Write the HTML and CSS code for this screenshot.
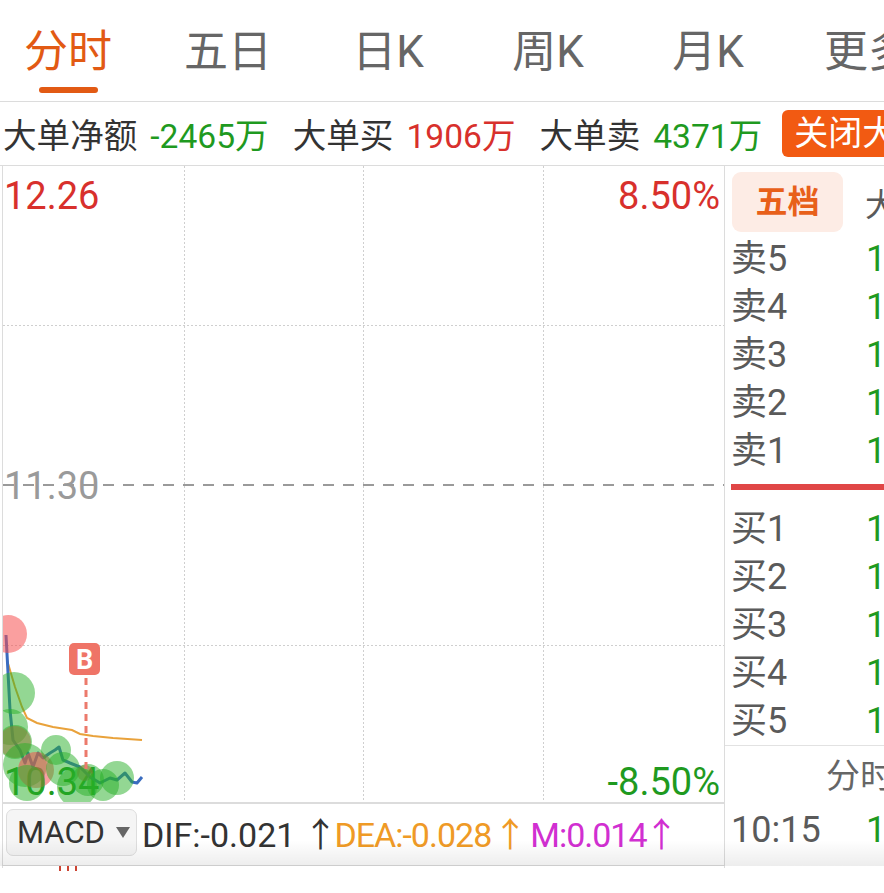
FILE: index.html
```html
<!DOCTYPE html>
<html lang="zh-CN">
<head>
    <meta charset="UTF-8">
    <meta name="viewport" content="width=device-width, initial-scale=1.0">
    <title>分时</title>
    <link rel="stylesheet" href="styles.css">
</head>
<body>
    <div class="page">
        <div class="tabs">
            <div class="tab active">分时</div>
            <div class="tab">五日</div>
            <div class="tab">日K</div>
            <div class="tab">周K</div>
            <div class="tab">月K</div>
            <div class="tab">更多</div>
        </div>

        <div class="summary">
            <span class="label">大单净额</span>
            <span class="num down">-2465万</span>
            <span class="label">大单买</span>
            <span class="num up">1906万</span>
            <span class="label">大单卖</span>
            <span class="num down">4371万</span>
            <button class="close-btn">关闭大单</button>
        </div>

        <div class="main">
            <div class="left">
                <svg class="chart" width="721" height="636" viewBox="0 0 721 636">
                    <!-- grid -->
                    <g stroke="#cfcfcf" stroke-width="1" stroke-dasharray="2 2">
                        <line x1="181.5" y1="0" x2="181.5" y2="636"/>
                        <line x1="360.5" y1="0" x2="360.5" y2="636"/>
                        <line x1="540.5" y1="0" x2="540.5" y2="636"/>
                        <line x1="0" y1="159.5" x2="721" y2="159.5"/>
                        <line x1="0" y1="479.5" x2="721" y2="479.5"/>
                    </g>

                    <g class="axis">
                        <text x="1" y="43" class="up-fill">12.26</text>
                        <text x="717" y="43" text-anchor="end" class="up-fill">8.50%</text>
                        <text x="1" y="333" class="mid-fill">11.30</text>
                        <text x="1" y="629" class="down-fill">10.34</text>
                        <text x="717" y="629" text-anchor="end" class="down-fill">-8.50%</text>
                    </g>

                    <line x1="0" y1="319" x2="721" y2="319" stroke="#9a9a9a" stroke-width="2" stroke-dasharray="11 9"/>

                    <!-- price + average -->
                    <polyline fill="none" stroke="#e9a23b" stroke-width="2"
                        points="4,494 12,521 19,541 24,552 34,557 50,561 69,564 77,568 90,570 110,572 139,574"/>
                    <polyline fill="none" stroke="#3a6cbf" stroke-width="3" stroke-linejoin="round"
                        points="3,469 7,544 10,574 12,577 17,584 22,597 25,587 30,601 35,587 40,592 47,587 52,584 56,581 60,594 67,597 77,601 87,611 97,617 107,612 114,614 122,607 129,616 134,617 139,611"/>

                    <!-- big order bubbles -->
                    <g class="bubbles">
                        <circle class="b-red" cx="5" cy="468" r="19"/>
                        <circle class="b-green" cx="11" cy="527" r="21"/>
                        <circle class="b-green" cx="7" cy="561" r="18"/>
                        <circle class="b-red" cx="12" cy="576" r="16"/>
                        <circle class="b-green" cx="12" cy="576" r="17"/>
                        <circle class="b-green" cx="22" cy="599" r="22"/>
                        <circle class="b-red" cx="33" cy="604" r="18"/>
                        <circle class="b-green" cx="53" cy="584" r="15"/>
                        <circle class="b-green" cx="60" cy="603" r="17"/>
                        <circle class="b-green" cx="24" cy="617" r="18"/>
                        <circle class="b-red" cx="82" cy="607" r="8"/>
                        <circle class="b-green" cx="74" cy="621" r="20"/>
                        <circle class="b-green" cx="85" cy="614" r="16"/>
                        <circle class="b-green" cx="100" cy="619" r="16"/>
                        <circle class="b-green" cx="114" cy="612" r="17"/>
                    </g>

                    <!-- buy point -->
                    <line x1="83" y1="512" x2="83" y2="604" stroke="#ec7a6c" stroke-width="3" stroke-dasharray="7 5"/>
                    <rect x="66" y="477" width="31" height="32" rx="5" fill="#ef7467"/>
                    <text x="81.5" y="503" text-anchor="middle" class="mark">B</text>
                </svg>

                <div class="macd">
                    <div class="macd-btn">MACD <span class="caret"></span></div>
                    <span class="dif">DIF:-0.021<span class="arr">↑</span></span>
                    <span class="dea">DEA:-0.028<span class="arr">↑</span></span>
                    <span class="m">M:0.014<span class="arr">↑</span></span>
                </div>
                <div class="next-chart">
                    <span class="tick"></span><span class="tick"></span><span class="tick"></span>
                </div>
            </div>

            <div class="side">
                <div class="depth-tabs">
                    <div class="depth-tab on">五档</div>
                    <div class="depth-tab">大单</div>
                </div>
                <div class="book">
                    <div class="row"><span>卖5</span><span class="vol">1</span></div>
                    <div class="row"><span>卖4</span><span class="vol">1</span></div>
                    <div class="row"><span>卖3</span><span class="vol">1</span></div>
                    <div class="row"><span>卖2</span><span class="vol">1</span></div>
                    <div class="row"><span>卖1</span><span class="vol">1</span></div>
                </div>
                <div class="spread"></div>
                <div class="book bids">
                    <div class="row"><span>买1</span><span class="vol">1</span></div>
                    <div class="row"><span>买2</span><span class="vol">1</span></div>
                    <div class="row"><span>买3</span><span class="vol">1</span></div>
                    <div class="row"><span>买4</span><span class="vol">1</span></div>
                    <div class="row"><span>买5</span><span class="vol">1</span></div>
                </div>
                <div class="ticks-head">分时成交</div>
                <div class="row"><span>10:15</span><span class="vol">1</span></div>
            </div>
        </div>
    </div>
</body>
</html>
```

FILE: styles.css
```css
body {
    margin: 0;
    background-color: #fff;
    font-family: Roboto, "Noto Sans CJK SC", sans-serif;
    color: #333;
}
.page {
    width: 884px;
    height: 893px;
    overflow: hidden;
}

/* period tabs */
.tabs {
    display: flex;
    height: 101px;
    margin-left: -12px;
    border-bottom: 1px solid #dcdcdc;
}
.tab {
    position: relative;
    flex: 0 0 160px;
    text-align: center;
    font-size: 44px;
    line-height: 44px;
    padding-top: 30px;
    color: #666;
    white-space: nowrap;
}
.tab.active {
    color: #e25a14;
}
.tab.active::after {
    content: '';
    position: absolute;
    left: 51px;
    top: 87px;
    width: 59px;
    height: 6px;
    border-radius: 3px;
    background-color: #e25a14;
}

/* big order summary */
.summary {
    display: flex;
    align-items: center;
    height: 63px;
    padding-left: 3px;
    border-bottom: 1px solid #dcdcdc;
    font-size: 33.6px;
    white-space: nowrap;
}
.summary .label {
    color: #333;
    margin-right: 13px;
}
.summary .num {
    margin-right: 24px;
}
.up { color: #d8302c; }
.down { color: #1f9a1f; }
.close-btn {
    flex: 0 0 auto;
    height: 47px;
    margin-left: -4px;
    padding: 0 12px;
    border: none;
    border-radius: 6px;
    background-color: #f25a12;
    color: #fff;
    font-family: inherit;
    font-size: 34px;
    line-height: 47px;
}

/* chart + order book */
.main {
    position: relative;
    display: flex;
    height: 702px;
}
.main::after {
    content: '';
    position: absolute;
    left: 0;
    right: 0;
    bottom: 2px;
    height: 26px;
    background: linear-gradient(rgba(0,0,0,0), rgba(0,0,0,0.07));
    pointer-events: none;
}
.left {
    width: 721px;
    margin-left: 2px;
    border-left: 1px solid #dcdcdc;
}
.chart {
    display: block;
    border-bottom: 2px solid #dcdcdc;
}
.axis text {
    font-family: Roboto, sans-serif;
    font-size: 38px;
}
.up-fill { fill: #d8302c; }
.down-fill { fill: #1f9a1f; }
.mid-fill { fill: #9a9a9a; }
.b-green { fill: rgba(40, 175, 40, 0.5); }
.b-red { fill: rgba(245, 80, 80, 0.55); }
.mark {
    font-family: Roboto, sans-serif;
    font-size: 27px;
    font-weight: 700;
    fill: #fff;
}

.macd {
    display: flex;
    align-items: center;
    height: 56px;
    padding-bottom: 5px;
    border-bottom: 1px solid #dcdcdc;
    font-size: 34px;
    white-space: nowrap;
}
.macd-btn {
    display: flex;
    align-items: center;
    height: 45px;
    width: 109px;
    margin: 0 5px 0 3px;
    padding: 0 10px;
    border: 1px solid #dedede;
    border-radius: 7px;
    background-color: #f5f5f5;
    color: #333;
    font-size: 31px;
}
.caret {
    margin-left: 11px;
    width: 0;
    height: 0;
    border-left: 7px solid transparent;
    border-right: 7px solid transparent;
    border-top: 11px solid #666;
}
.arr {
    margin-left: 2px;
}
.dif { color: #333; margin-right: -3px; }
.dif .arr { margin-left: 8px; }
.dea { color: #ef9a26; margin-right: 4px; letter-spacing: -1px; }
.m { color: #d12fd1; letter-spacing: -1px; }
.m .arr { margin-left: -2px; }
.next-chart {
    display: flex;
    gap: 6px;
    height: 5px;
    padding-left: 56px;
}
.tick {
    width: 2px;
    height: 5px;
    background-color: #c43;
}

/* order book side */
.side {
    flex: 1;
    border-left: 1px solid #dcdcdc;
    padding-left: 6px;
    font-size: 36px;
    color: #5a5a5a;
    white-space: nowrap;
    overflow: hidden;
}
.depth-tabs {
    display: flex;
    align-items: center;
    gap: 22px;
    margin-top: 6px;
    margin-left: 1px;
    height: 60px;
}
.depth-tab {
    flex: 0 0 auto;
    font-size: 32px;
}
.depth-tab.on {
    width: 111px;
    height: 60px;
    line-height: 60px;
    text-align: center;
    border-radius: 9px;
    background-color: #fdece5;
    color: #e8601a;
    font-weight: 700;
}
.book {
    margin-top: 3px;
}
.row {
    display: flex;
    height: 48px;
    line-height: 48px;
}
.row .vol {
    margin-left: auto;
    width: 18px;
    color: #1f9a1f;
}
.spread {
    height: 6px;
    margin-top: 9px;
    background-color: #e04646;
}
.bids {
    margin-top: 15px;
    margin-left: -6px;
    padding-left: 6px;
    border-bottom: 1px solid #e2e2e2;
}
.ticks-head {
    height: 60px;
    line-height: 60px;
    padding-left: 95px;
    font-size: 34px;
    color: #666;
}
```
